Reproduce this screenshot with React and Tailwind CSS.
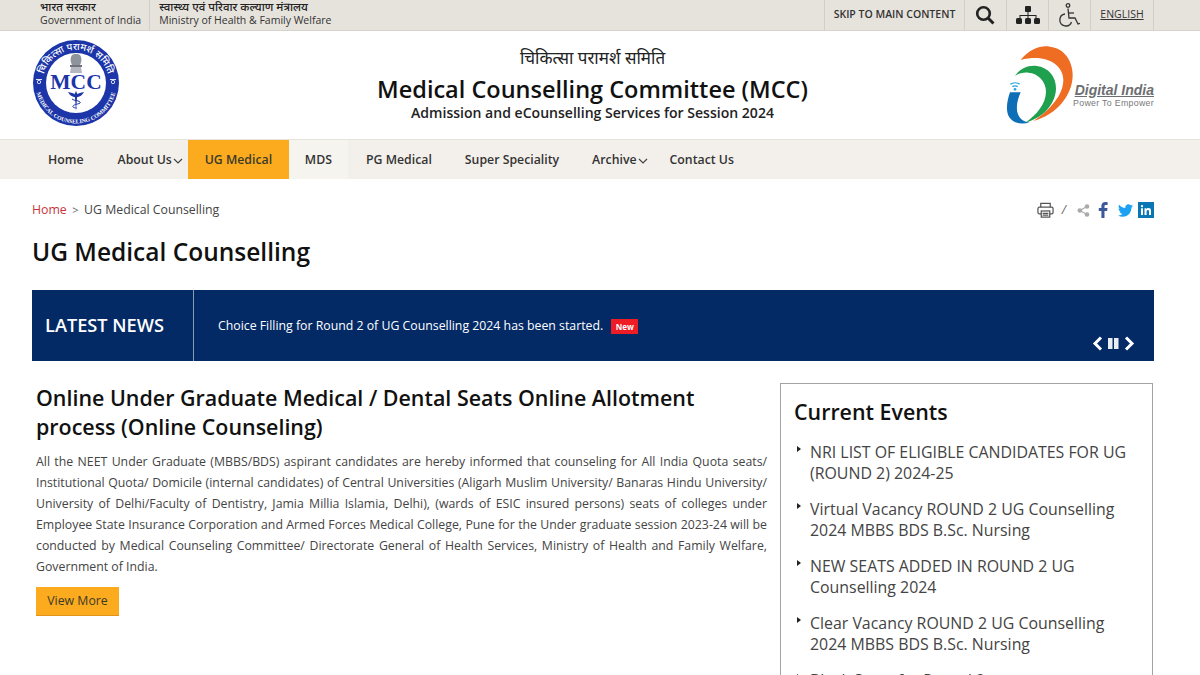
import React from "react";

const OS = "font-['Open_Sans','Noto_Sans',sans-serif]";
const DV = "font-['Noto_Sans_Devanagari','Noto_Sans',sans-serif]";

function MccLogo() {
  return (
    <svg width="90" height="88" viewBox="0 0 90 88" className="block">
      <circle cx="45" cy="44" r="43" fill="#1c35a8" />
      <circle cx="45" cy="44" r="30" fill="#fff" />
      {/* emblem */}
      <path d="M40 18c1-3 3-3 5-3s4 0 5 3c1 3 0 6-1 8H41c-1-2-2-5-1-8z" fill="#8f949c" />
      <rect x="39" y="26" width="12" height="2" fill="#6f747c" />
      <path d="M40 28h10l1 6H39z" fill="#b4b7bf" />
      {/* MCC */}
      <text x="45" y="50" textAnchor="middle" fontFamily="'Liberation Serif',serif" fontWeight="700" fontSize="21.500" fill="#1c35a8">MCC</text>
      {/* caduceus */}
      <path d="M45 52l1.300 3-1.300 17-1.300-17z" fill="#1c35a8" />
      <path d="M37 53c3 .5 5.500 1 8 3 2.500-2 5-2.500 8-3-1.500 3-4 5-8 5.500-4-.5-6.500-2.500-8-5.500z" fill="#1c35a8" />
      <path d="M41 60c2 2 6 1 8 3s-6 2-7 4 4 2 4 2" fill="none" stroke="#1c35a8" strokeWidth="1" />
      {/* ring marks */}
      <rect x="5" y="40" width="6" height="1" fill="#dfe3f5" />
      <circle cx="8" cy="43" r="1.700" fill="none" stroke="#fff" strokeWidth="0.800" />
      <circle cx="82" cy="43" r="1.700" fill="none" stroke="#fff" strokeWidth="0.800" />
      <rect x="79" y="40" width="6" height="1" fill="#dfe3f5" />
      {/* ring text */}
      <path id="mcc-top" d="M14 55.300A33 33 0 1 1 76 55.300" fill="none" />
      <text fontFamily="'Noto Sans Devanagari','Noto Sans',sans-serif" fontSize="9.800" fontWeight="500" fill="#fff">
        <textPath href="#mcc-top" startOffset="50%" textAnchor="middle">चिकित्सा परामर्श समिति</textPath>
      </text>
      <path id="mcc-bot" d="M4.500 44a40.500 40.500 0 0 0 81 0" fill="none" />
      <text fontFamily="'Liberation Serif',serif" fontSize="5.800" fontWeight="700" fill="#fff">
        <textPath href="#mcc-bot" startOffset="50%" textAnchor="middle">MEDICAL COUNSELING COMMITTEE</textPath>
      </text>
    </svg>
  );
}

function DigitalIndia() {
  return (
    <div className="relative h-[90px] w-[154px]">
      <svg width="80" height="90" viewBox="0 0 240 270" className="absolute left-0 top-0">
        <path d="M62 60C90 25 125 15 150 20C195 25 218 65 218 105C218 165 170 225 100 243C150 210 190 165 190 120C190 75 140 40 62 60Z" fill="#ef6c23" />
        <path d="M45 108C60 85 85 75 110 78C145 82 168 110 168 145C168 190 130 235 75 248C110 225 138 190 138 155C138 125 115 100 85 98C70 97 55 100 45 108Z" fill="#1fa04f" />
        <path d="M30 157H62C52 180 46 205 55 225C62 240 75 247 90 247C65 255 40 250 28 232C15 212 22 180 30 157Z" fill="#0f6fb6" />
        <path d="M31 133c8-6 20-6 28 0M37 140c5-3 11-3 16 0" stroke="#29a3dc" strokeWidth="4" fill="none" />
        <circle cx="45" cy="148" r="4" fill="#29a3dc" />
      </svg>
      <div className="absolute right-0 top-[42px] font-['Liberation_Sans',sans-serif] text-[14px] leading-[16px] font-bold text-[#6d6e71] italic underline">Digital India</div>
      <div className="absolute right-0 top-[57px] font-['Liberation_Sans',sans-serif] text-[8.800px] leading-[12px] tracking-[0.3px] text-[#77787b]">Power To Empower</div>
    </div>
  );
}

const Chevron = () => (
  <svg width="10" height="6" viewBox="0 0 10 6" className="ml-[1px]">
    <path d="M1 1l4 4 4-4" fill="none" stroke="#444" strokeWidth="1.200" />
  </svg>
);

function NavItem({ children, active, chev, className = "" }) {
  return (
    <a className={`flex h-[39px] items-center pt-[2px] text-[12.300px] font-semibold ${active ? "bg-[#fdab1e] text-[#3a3a2a]" : "text-[#333]"} ${className}`}>
      {children}
      {chev && <Chevron />}
    </a>
  );
}

function EventItem({ children }) {
  return (
    <li className="relative pl-[16px] text-[15.900px] leading-[21px] text-[#444]">
      <span className="absolute top-[4px] left-[3px] h-0 w-0 border-y-[3px] border-l-[4px] border-y-transparent border-l-[#222]" />
      {children}
    </li>
  );
}

export default function App() {
  return (
    <div className={`relative h-[675px] w-[1200px] overflow-hidden bg-white ${OS}`}>
      {/* Top strip */}
      <div className="flex h-[31px] items-stretch justify-between border-b border-[#d6d3cd] bg-[#e6e3dd] pr-[46px] pl-[40px]">
        <div className="flex">
          <div className="border-r border-[#d2cfc9] pr-[8px] text-[10.500px] leading-[13px] text-[#333]">
            <div className={`mt-[3px] text-[11.500px] leading-[11px] font-medium text-[#222] ${DV}`}>भारत सरकार</div>
            <div>Government of India</div>
          </div>
          <div className="pl-[9px] text-[10.500px] leading-[13px] text-[#333]">
            <div className={`mt-[3px] text-[11.500px] leading-[11px] font-medium text-[#222] ${DV}`}>स्वास्थ्य एवं परिवार कल्याण मंत्रालय</div>
            <div>Ministry of Health &amp; Family Welfare</div>
          </div>
        </div>
        <div className="flex items-stretch text-[#333]">
          <div className="flex w-[141px] items-center justify-center border-x border-[#d2cfc9] text-[10.500px] font-semibold">SKIP TO MAIN CONTENT</div>
          <div className="flex w-[42px] items-center justify-center border-r border-[#d2cfc9]">
            <svg width="20" height="20" viewBox="0 0 20 20" className="mr-[1px]"><circle cx="8.500" cy="8.500" r="6.300" fill="none" stroke="#222" strokeWidth="2.600" /><path d="M13 13l5.500 5.500" stroke="#222" strokeWidth="3" /></svg>
          </div>
          <div className="flex w-[42px] items-center justify-center border-r border-[#d2cfc9]">
            <svg width="24" height="19" viewBox="0 0 24 19" fill="#222"><rect x="9" y="0" width="6" height="6" rx="1" /><path d="M11.500 6h1v3h8v3h-1v-2h-7v2h-1v-2h-7v2h-1V9h8z" /><rect x="0" y="12" width="6" height="6" rx="1.500" /><rect x="9" y="12" width="6" height="6" rx="1.500" /><rect x="18" y="12" width="6" height="6" rx="1.500" /></svg>
          </div>
          <div className="flex w-[42px] items-center justify-center border-r border-[#d2cfc9]">
            <svg width="22" height="24" viewBox="0 0 22 24" className="mr-[2px]" fill="none" stroke="#333" strokeWidth="1.300"><circle cx="10" cy="2.500" r="1.800" /><path d="M10 5.500l1 9.500h6l3 6 2-.6" /><path d="M10.500 10h5.500" /><path d="M7 11a6 6 0 1 0 6.500 8" /></svg>
          </div>
          <div className="flex w-[63px] items-center justify-center border-r border-[#d2cfc9] text-[10.500px] font-normal underline">ENGLISH</div>
        </div>
      </div>

      {/* Header */}
      <div className="relative flex h-[108px] items-start justify-between pr-[46px] pl-[31px]">
        <div className="mt-[8px]"><MccLogo /></div>
        <div className="absolute top-0 left-0 flex h-[108px] w-[1185px] flex-col items-center pt-[17px]">
          <div className={`text-[17px] leading-[24px] text-[#222] ${DV}`}>चिकित्सा परामर्श समिति</div>
          <div className="mt-[2px] text-[23.500px] leading-[30px] font-semibold text-[#111]">Medical Counselling Committee (MCC)</div>
          <div className="mt-[-1px] text-[14.050px] leading-[20px] font-semibold text-[#222]">Admission and eCounselling Services for Session 2024</div>
        </div>
        <div className="mt-[9px]"><DigitalIndia /></div>
      </div>

      {/* Nav */}
      <nav className="flex h-[40px] items-end border-t border-[#e6e3dd] bg-[#f3f0eb] pl-[48px]">
        <NavItem className="mr-[34px]">Home</NavItem>
        <NavItem chev className="mr-[5px]">About Us</NavItem>
        <NavItem active className="w-[101px] justify-center">UG Medical</NavItem>
        <NavItem className="mr-[18px] bg-[#f6f4ef] px-[16px]">MDS</NavItem>
        <NavItem className="mr-[33px]">PG Medical</NavItem>
        <NavItem className="mr-[33px]">Super Speciality</NavItem>
        <NavItem chev className="mr-[22px]">Archive</NavItem>
        <NavItem>Contact Us</NavItem>
      </nav>

      <div className="px-[32px]">
        {/* Breadcrumb */}
        <div className="mt-[20px] flex h-[22px] items-center justify-between pr-[14px] text-[12.300px] text-[#444]">
          <div className="flex items-center">
            <span className="text-[#c8343c]">Home</span>
            <span className="mx-[5.500px] text-[11px] text-[#666]">&gt;</span>
            <span>UG Medical Counselling</span>
          </div>
          <div className="flex items-center">
            <svg width="17" height="17" viewBox="0 0 18 17" className="ml-[1px]" fill="none" stroke="#555" strokeWidth="1.300"><path d="M4 5V1h10v4" /><rect x="1" y="5" width="16" height="7" rx="1.500" /><rect x="4.500" y="9" width="9" height="6.500" fill="#fff" /><path d="M6 11.500h6M6 13.500h6" /></svg>
            <span className="ml-[8px] text-[12px] text-[#666] italic">/</span>
            <svg width="13" height="13" viewBox="0 0 13 13" className="ml-[11px]" fill="#aaa"><circle cx="2.800" cy="6.500" r="2.300" /><circle cx="10" cy="2.500" r="2.300" /><circle cx="10" cy="10.500" r="2.300" /><path d="M2.800 6.500L10 2.500M2.800 6.500L10 10.500" stroke="#aaa" strokeWidth="1.200" /></svg>
            <svg width="10" height="16" viewBox="0 0 10 16" className="ml-[8px]" fill="#3b5998"><path d="M6.500 16V9h2.600l.4-3H6.500V4.300c0-.9.300-1.400 1.500-1.400h1.600V.2C9.300.1 8.400 0 7.300 0 5 0 3.400 1.400 3.400 4v2H.8v3h2.600v7z" /></svg>
            <svg width="15" height="13" viewBox="0 0 24 20" className="ml-[10px]" fill="#1da1f2"><path d="M24 2.400c-.9.400-1.800.7-2.800.8 1-.6 1.800-1.600 2.200-2.700-1 .6-2 1-3.100 1.200C19.300.7 18 0 16.600 0c-2.700 0-4.900 2.200-4.900 4.900 0 .4 0 .8.100 1.100C7.700 5.800 4.100 3.800 1.700.9 1.200 1.600 1 2.500 1 3.400c0 1.700.9 3.200 2.200 4.100-.8 0-1.600-.2-2.200-.6v.1c0 2.400 1.700 4.400 3.900 4.800-.7.200-1.500.2-2.200.1.600 2 2.400 3.400 4.600 3.400C5.500 17.100 3.300 18 1 18c-.3 0-.7 0-1-.1C2.200 19.300 4.800 20 7.500 20c9.100 0 14-7.500 14-14v-.6c1-.7 1.800-1.600 2.500-3z" /></svg>
            <svg width="16" height="16" viewBox="0 0 16 16" className="ml-[5px]"><rect width="16" height="16" fill="#0a76b4" /><path d="M3 6.300h2v6.700H3zM4 3a1.100 1.100 0 1 1 0 2.300A1.100 1.100 0 0 1 4 3zM6.500 6.300h1.900v.9c.4-.6 1.100-1.100 2.100-1.100 2 0 2.500 1.300 2.500 3V13h-2V9.600c0-.8-.1-1.700-1.100-1.700s-1.300.8-1.300 1.700V13h-2.100z" fill="#fff" /></svg>
          </div>
        </div>

        <h1 className="mt-[14px] text-[24.500px] leading-[34px] font-semibold text-[#111]">UG Medical Counselling</h1>

        {/* Latest news */}
        <div className="relative mt-[21px] flex h-[71px] w-[1122px] bg-[#042a66] text-white">
          <div className="flex w-[162px] items-center border-r border-[#8a9bb8] pt-[1px] pl-[13px] text-[18.200px] font-semibold">LATEST NEWS</div>
          <div className="flex h-[70px] items-center pt-[2px] pl-[24px] text-[12.300px]">
            <span>Choice Filling for Round 2 of UG Counselling 2024 has been started.</span>
            <span className="ml-[8px] bg-[#ee1c25] px-[4.500px] py-[2px] text-[8px] leading-[11px] font-bold">New</span>
          </div>
          <div className="absolute top-[46px] right-[19px] flex items-center gap-[4px]">
            <svg width="12" height="15" viewBox="0 0 12 15"><path d="M9 1.500L3 7.500l6 6" fill="none" stroke="#fff" strokeWidth="3" /></svg>
            <svg width="11" height="11" viewBox="0 0 11 11" fill="#e8ecf3"><rect x="0" width="4.500" height="11" /><rect x="6" width="4.500" height="11" /></svg>
            <svg width="12" height="15" viewBox="0 0 12 15"><path d="M3 1.500l6 6-6 6" fill="none" stroke="#fff" strokeWidth="3" /></svg>
          </div>
        </div>

        {/* Main */}
        <div className="mt-[22px] flex items-start">
          <div className="w-[735px] pl-[4px]">
            <h2 className="text-[21.430px] leading-[29px] font-semibold text-[#111]">Online Under Graduate Medical / Dental Seats Online Allotment process (Online Counseling)</h2>
            <p className="mt-[10px] text-justify text-[12.300px] leading-[21px] text-[#444]">All the NEET Under Graduate (MBBS/BDS) aspirant candidates are hereby informed that counseling for All India Quota seats/ Institutional Quota/ Domicile (internal candidates) of Central Universities (Aligarh Muslim University/ Banaras Hindu University/ University of Delhi/Faculty of Dentistry, Jamia Millia Islamia, Delhi), (wards of ESIC insured persons) seats of colleges under Employee State Insurance Corporation and Armed Forces Medical College, Pune for the Under graduate session 2023-24 will be conducted by Medical Counseling Committee/ Directorate General of Health Services, Ministry of Health and Family Welfare, Government of India.</p>
            <a className="mt-[10px] flex h-[29px] w-[83px] items-center justify-center border-b border-[#e0951a] bg-[#fdab1e] text-[12.300px] text-[#3a3a2a]">View More</a>
          </div>
          <aside className="ml-[13px] h-[400px] w-[373px] border border-[#a3a3a3] px-[13px] pt-[12px]">
            <h3 className="text-[21.400px] leading-[32px] font-semibold text-[#111]">Current Events</h3>
            <ul className="mt-[14px] flex flex-col gap-[15px]">
              <EventItem>NRI LIST OF ELIGIBLE CANDIDATES FOR UG (ROUND 2) 2024-25</EventItem>
              <EventItem>Virtual Vacancy ROUND 2 UG Counselling 2024 MBBS BDS B.Sc. Nursing</EventItem>
              <EventItem>NEW SEATS ADDED IN ROUND 2 UG Counselling 2024</EventItem>
              <EventItem>Clear Vacancy ROUND 2 UG Counselling 2024 MBBS BDS B.Sc. Nursing</EventItem>
              <EventItem>Block Seats for Round 2</EventItem>
            </ul>
          </aside>
        </div>
      </div>
    </div>
  );
}
